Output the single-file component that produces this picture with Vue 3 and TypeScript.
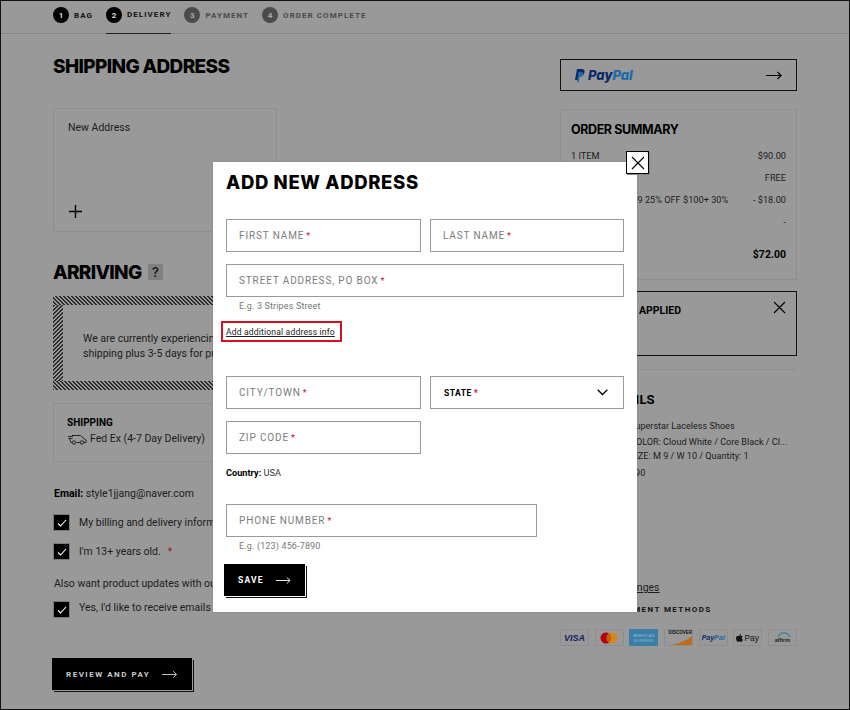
<script setup lang="ts">
const steps = [
  { n: 1, label: 'BAG', state: 'done' },
  { n: 2, label: 'DELIVERY', state: 'current' },
  { n: 3, label: 'PAYMENT', state: 'todo' },
  { n: 4, label: 'ORDER COMPLETE', state: 'todo' },
]
const summary = [
  { label: '1 ITEM', value: '$90.00' },
  { label: 'DELIVERY', value: 'FREE' },
  { label: '20% OFF $50-$99 25% OFF $100+ 30%\nOFF $200+', value: '- $18.00' },
  { label: 'SALES TAX', value: '-' },
]
const checks = [
  { id: 'billing', text: 'My billing and delivery information are the same', req: false },
  { id: 'age', text: "I'm 13+ years old.", req: true },
]
</script>

<template>
  <div class="frame">
    <nav class="steps">
      <div v-for="s in steps" :key="s.n" class="step" :class="s.state">
        <span class="num">{{ s.n }}</span><span class="lab">{{ s.label }}</span>
      </div>
    </nav>

    <main class="columns">
      <section class="left">
        <h1 class="h-ship">SHIPPING ADDRESS</h1>
        <div class="addr-card">
          <span>New Address</span>
          <svg class="plus" width="15" height="15" viewBox="0 0 15 15"><path d="M7.5 1v13M1 7.5h13" stroke="#000" stroke-width="1.4" fill="none" /></svg>
        </div>
        <h2 class="h-arr">ARRIVING <span class="q">?</span></h2>
        <div class="stripe">
          <span class="stripe-left"></span>
          <div class="stripe-in">
            We are currently experiencing high order volume. Please allow standard<br />
            shipping plus 3-5 days for processing and delivery of your order.
          </div>
        </div>
        <div class="ship-box">
          <strong>SHIPPING</strong>
          <div class="ship-line">
            <svg width="20" height="11" viewBox="0 0 20 11" fill="none" stroke="#222" stroke-width="1">
              <path d="M5 1.500h8.500l4 3.500 1.500 1v2.500h-2M9.500 8.500h4M5 8.500H4L2.500 5M1 2.500h5M1.500 4.500h4" />
              <circle cx="7" cy="8.500" r="1.700" /><circle cx="15" cy="8.500" r="1.700" />
            </svg>
            <span>Fed Ex (4-7 Day Delivery)</span>
          </div>
        </div>
        <p class="email"><b>Email:</b> style1jjang@naver.com</p>
        <div v-for="c in checks" :key="c.id" class="check-row">
          <span class="box"><svg width="10" height="8" viewBox="0 0 10 8"><path d="M1 4.500 3.500 7 9 1" stroke="#fff" stroke-width="1.100" fill="none" /></svg></span>
          <span>{{ c.text }}<i v-if="c.req" class="req-gap">*</i></span>
        </div>
        <p class="also">Also want product updates with our newsletter?</p>
        <div class="check-row raised">
          <span class="box"><svg width="10" height="8" viewBox="0 0 10 8"><path d="M1 4.500 3.500 7 9 1" stroke="#fff" stroke-width="1.100" fill="none" /></svg></span>
          <span class="raised-text">Yes, I'd like to receive emails from adidas.</span>
        </div>
        <button class="cta review">
          <span>REVIEW AND PAY</span>
          <svg width="17" height="9" viewBox="0 0 17 9"><path d="M0 4.500h15.500M12 1l3.700 3.500L12 8" stroke="#ccc" stroke-width="1" fill="none" /></svg>
        </button>
      </section>

      <aside class="right">
        <div class="paypal">
          <span class="pp"><svg width="10" height="13" viewBox="0 0 10 13"><path d="M2 0h4.500C9 0 10 1.500 9.500 3.500 9 6 7 7 5 7H3.500L2.800 11H0z" fill="#0b2a6b" /><path d="M3.500 3h3c1.500 0 2 1 1.700 2.300C8 7 6.500 8 5 8H4.500L3.800 13H2z" fill="#1b6aa8" /></svg><span><em class="pay">Pay</em><em class="pal">Pal</em></span></span>
          <svg width="16" height="9" viewBox="0 0 16 9"><path d="M0 4.500h15M11.500 1l3.700 3.500L11.500 8" stroke="#000" stroke-width="1.100" fill="none" /></svg>
        </div>
        <div class="summary">
          <h3>ORDER SUMMARY</h3>
          <div v-for="r in summary" :key="r.label" class="sum-row">
            <span class="sum-label">{{ r.label }}</span><span>{{ r.value }}</span>
          </div>
          <div class="sum-row total"><span>TOTAL</span><span>$72.00</span></div>
        </div>
        <div class="coupon">
          <strong>COUPON APPLIED</strong>
          <svg class="coupon-x" width="13" height="13" viewBox="0 0 13 13"><path d="M1 1l11 11M12 1 1 12" stroke="#000" stroke-width="1.100" fill="none" /></svg>
        </div>
        <hr class="rule" />
        <h4 class="details">ORDER DETAILS</h4>
        <div class="prod">
          <p class="p1">Superstar Laceless Shoes</p>
          <p class="p2">COLOR: Cloud White / Core Black / Cl...</p>
          <p class="p3">SIZE: M 9 / W 10 / Quantity: 1</p>
          <p class="p4">$90</p>
        </div>
        <a class="exch">Returns &amp; Exchanges</a>
        <p class="methods">ACCEPTED PAYMENT METHODS</p>
        <div class="pays">
          <span class="pay-i visa">VISA</span>
          <span class="pay-i mc"><svg width="18" height="12" viewBox="0 0 18 12"><circle cx="6" cy="6" r="5.500" fill="#b5000f" /><circle cx="12" cy="6" r="5.500" fill="#d08a1c" /><path d="M9 1.500a5.500 5.500 0 0 1 0 9 5.500 5.500 0 0 1 0-9z" fill="#cc5a10" /></svg></span>
          <span class="pay-i amex">AMERICAN<br />EXPRESS</span>
          <span class="pay-i disc">DISCOVER<svg width="22" height="9" viewBox="0 0 22 9"><path d="M0 9C8 8 16 5 22 0v9z" fill="#c26a1a" /></svg></span>
          <span class="pay-i pp-s"><span><em class="pay">Pay</em><em class="pal">Pal</em></span></span>
          <span class="pay-i apple"><svg width="7" height="8" viewBox="0 0 7 8"><path d="M3.500 2C4.500 1.500 6 1.600 6.600 2.700 5.300 3.500 5.500 5.300 7 5.800 6.500 7 5.500 8.200 4.500 7.800 3.800 7.500 3.200 7.500 2.500 7.800 1.200 8.200 0 5.800 0 4.200 0 2.200 2 1.400 3.500 2zM3.500 1.700C3.400.8 4.200 0 5 0c.1.900-.6 1.700-1.500 1.700z" fill="#111" /></svg>Pay</span>
          <span class="pay-i affirm"><svg width="20" height="6" viewBox="0 0 20 6"><path d="M6 5C8 0 15-1 18 5" stroke="#3a7ea8" stroke-width="1.200" fill="none" /></svg><b>affirm</b></span>
        </div>
      </aside>
    </main>

    <div class="modal">
      <button class="close" aria-label="Close">
        <svg width="14" height="14" viewBox="0 0 14 14"><path d="M1 1l12 12M13 1 1 13" stroke="#000" stroke-width="1.100" fill="none" /></svg>
      </button>
      <h2 class="m-title">ADD NEW ADDRESS</h2>
      <div class="f-row first">
        <div class="field">FIRST NAME<i class="req">*</i></div>
        <div class="field">LAST NAME<i class="req">*</i></div>
      </div>
      <div class="f-row single"><div class="field">STREET ADDRESS, PO BOX<i class="req">*</i></div></div>
      <p class="hint">E.g. 3 Stripes Street</p>
      <div class="link-box"><a>Add additional address info</a></div>
      <div class="f-row city">
        <div class="field">CITY/TOWN<i class="req">*</i></div>
        <div class="field select">
          <span>STATE<i class="req">*</i></span>
          <svg width="11" height="7" viewBox="0 0 11 7"><path d="M.7.8 5.500 5.500 10.300.8" stroke="#000" stroke-width="1.300" fill="none" /></svg>
        </div>
      </div>
      <div class="f-row"><div class="field">ZIP CODE<i class="req">*</i></div></div>
      <p class="country"><b>Country:</b> USA</p>
      <div class="f-row single phone"><div class="field">PHONE NUMBER<i class="req">*</i></div></div>
      <p class="hint">E.g. (123) 456-7890</p>
      <button class="cta save">
        <span>SAVE</span>
        <svg width="17" height="9" viewBox="0 0 17 9"><path d="M0 4.500h15.500M12 1l3.700 3.500L12 8" stroke="#fff" stroke-width="1" fill="none" /></svg>
      </button>
    </div>
  </div>
</template>

<style>
html, body { margin: 0; background: #999; }
</style>

<style scoped>
.frame {
  position: relative;
  width: 850px;
  height: 710px;
  box-sizing: border-box;
  border: 1px solid #111;
  background: #999;
  overflow: hidden;
  font-family: Roboto, "Liberation Sans", sans-serif;
  font-size: 10px;
  color: #1c1c1c;
}
h1, h2, h3, h4, p { margin: 0; }
i { font-style: normal; }

.steps {
  display: flex;
  height: 32px;
  padding-left: 52px;
  border-bottom: 1px solid #878787;
}
.step {
  display: flex;
  align-items: flex-start;
  gap: 5px;
  height: 32px;
  padding-top: 6px;
  box-sizing: border-box;
  margin-right: 13px;
}
.step.current { border-bottom: 1px solid #222; height: 33px; }
.num {
  width: 16px;
  height: 16px;
  border-radius: 50%;
  background: #000;
  color: #ddd;
  display: flex;
  align-items: center;
  justify-content: center;
  font-size: 8px;
  font-weight: 700;
}
.lab {
  font-size: 8px;
  font-weight: 700;
  letter-spacing: 1.050px;
  line-height: 17px;
  color: #111;
  white-space: nowrap;
}
.step.current .lab { line-height: 15px; }
.todo .num { background: #4b4b4b; color: #aaa; }
.todo .lab { color: #4a4a4a; }

.columns { display: flex; padding-left: 52px; }
.left { width: 507px; flex: none; }
.right { width: 237px; flex: none; }

.h-ship {
  margin-top: 22px;
  font-family: Inter, sans-serif;
  font-size: 19px;
  font-weight: 800;
  letter-spacing: -0.650px;
  line-height: 22px;
  color: #000;
}
.addr-card {
  position: relative;
  margin-top: 30px;
  width: 224px;
  height: 124px;
  box-sizing: border-box;
  border: 1px solid #8e8e8e;
  padding: 12px 14px;
  font-size: 10.500px;
}
.plus { position: absolute; left: 14px; bottom: 12px; }
.h-arr {
  margin-top: 29px;
  font-family: Inter, sans-serif;
  font-size: 19px;
  font-weight: 800;
  letter-spacing: -0.700px;
  line-height: 24px;
  color: #000;
}
.q {
  display: inline-flex;
  align-items: center;
  justify-content: center;
  width: 15px;
  height: 16px;
  margin-left: 3px;
  background: #808080;
  font-size: 13px;
  font-weight: 500;
  letter-spacing: 0;
  vertical-align: 2px;
  color: #111;
}
.stripe {
  position: relative;
  margin-top: 11px;
  height: 94px;
  width: 480px;
  box-sizing: border-box;
  padding: 9px 10px;
  background: repeating-linear-gradient(45deg, #2c2c2c 0 1.414px, #999 1.414px 2.828px);
}
.stripe-left {
  position: absolute;
  left: 0;
  top: 9px;
  bottom: 9px;
  width: 10px;
  background: repeating-linear-gradient(-45deg, #2c2c2c 0 1.414px, #999 1.414px 2.828px);
}
.stripe-in {
  position: relative;
  height: 100%;
  box-sizing: border-box;
  background: #999;
  padding: 27px 20px 0;
  font-size: 10.500px;
  line-height: 14.500px;
  white-space: nowrap;
}
.ship-box {
  margin-top: 13px;
  height: 59px;
  width: 480px;
  box-sizing: border-box;
  border: 1px solid #8e8e8e;
  padding: 13px 13px;
  font-size: 10.500px;
}
.ship-box strong { display: block; font-size: 10px; line-height: 12px; color: #000; }
.ship-line { display: flex; align-items: center; gap: 3px; margin-top: 3px; line-height: 14px; }
.email { margin-top: 25px; padding-left: 1px; font-size: 10.500px; line-height: 13px; }
.email b { color: #000; }
.check-row {
  display: flex;
  align-items: center;
  gap: 9px;
  height: 19px;
  margin-top: 10px;
  font-size: 10.500px;
  white-space: nowrap;
}
.email + .check-row { margin-top: 13px; }
.box {
  width: 17px;
  height: 17px;
  box-sizing: border-box;
  background: #000;
  border: 1px solid #7a7a7a;
  display: flex;
  align-items: center;
  justify-content: center;
  flex: none;
}
.req-gap { color: #a30d1c; margin-left: 7px; font-size: 10px; }
.also { margin-top: 16px; padding-left: 1px; font-size: 10.500px; line-height: 13px; }
.also + .check-row { margin-top: 10px; }
.raised-text { padding-bottom: 5px; }

.cta {
  display: flex;
  align-items: center;
  border: 0;
  background: #000;
  font-family: Roboto, sans-serif;
  font-weight: 700;
  cursor: pointer;
  box-sizing: border-box;
  padding: 0;
  white-space: nowrap;
}
.review {
  width: 140px;
  height: 32px;
  margin-top: 39px;
  margin-left: -1px;
  padding: 0 14px;
  gap: 12px;
  font-size: 8px;
  letter-spacing: 1.500px;
  box-shadow: 1px 1px 0 #999, 2px 2px 0 #111;
  color: #ccc;
}

.paypal {
  margin-top: 25px;
  height: 32px;
  box-sizing: border-box;
  border: 1px solid #111;
  display: flex;
  align-items: center;
  justify-content: space-between;
  padding: 0 14px;
}
.pp { display: flex; align-items: center; gap: 3px; font-size: 13px; font-weight: 800; font-family: Inter, sans-serif; }
.pay { color: #0b2a6b; font-style: italic; }
.pal { color: #1b6aa8; font-style: italic; }
.summary {
  margin-top: 18px;
  height: 171px;
  box-sizing: border-box;
  border: 1px solid #8e8e8e;
  padding: 12px 10px;
}
.summary h3 {
  font-family: Inter, sans-serif;
  font-size: 12.500px;
  font-weight: 700;
  letter-spacing: -0.400px;
  line-height: 15px;
  color: #000;
  margin-bottom: 13px;
}
.sum-row {
  display: flex;
  justify-content: space-between;
  font-size: 9.200px;
  height: 22px;
  line-height: 12px;
}
.sum-label { white-space: pre-line; }
.sum-row:nth-of-type(4) { height: 33px; }
.sum-row:nth-of-type(5) { height: 21px; }
.total { font-weight: 700; font-size: 10.500px; color: #000; }
.coupon {
  position: relative;
  margin-top: 11px;
  height: 65px;
  box-sizing: border-box;
  border: 1px solid #111;
  padding: 12px 14px;
  font-size: 10.500px;
  color: #000;
  text-align: right;
  padding-right: 115px;
  white-space: nowrap;
}
.coupon-x { position: absolute; right: 10px; top: 9px; }
.rule { margin: 13px 0 0; border: 0; border-top: 1px solid #8e8e8e; }
.details {
  margin-top: 22px;
  margin-left: -1px;
  font-size: 13px;
  font-weight: 700;
  line-height: 15px;
  color: #000;
}
.prod { padding-left: 70px; font-size: 9.100px; white-space: nowrap; }
.p1 { margin-top: 13px; line-height: 12px; }
.p2 { margin-top: 4px; line-height: 12px; }
.p3 { margin-top: 1px; line-height: 14px; }
.p4 { margin-top: 4px; line-height: 12px; }
.exch {
  display: block;
  margin-top: 102px;
  padding-left: 1px;
  font-size: 10.500px;
  line-height: 13px;
  text-decoration: underline;
}
.methods {
  margin-top: 10px;
  font-size: 8px;
  font-weight: 700;
  letter-spacing: 1.400px;
  line-height: 11px;
  color: #111;
}
.pays { display: flex; justify-content: space-between; margin-top: 14px; }
.pay-i {
  width: 29px;
  height: 17px;
  box-sizing: border-box;
  border: 1px solid #8e8e8e;
  display: flex;
  align-items: center;
  justify-content: center;
  flex: none;
  font-family: "Liberation Sans", sans-serif;
}
.visa { font-size: 9px; font-weight: 700; font-style: italic; color: #111f60; }
.amex {
  border: 0;
  background: #3a7fa8;
  color: #8fb9cf;
  font-size: 4px;
  line-height: 5px;
  text-align: center;
  flex-direction: column;
}
.disc {
  flex-direction: column;
  justify-content: flex-start;
  align-items: flex-end;
  font-size: 4.500px;
  font-weight: 700;
  line-height: 6px;
  color: #111;
}
.pp-s { font-size: 7px; font-weight: 700; }
.apple { font-size: 8.500px; gap: 1px; color: #111; font-weight: 500; }
.affirm { flex-direction: column; font-size: 5.500px; line-height: 5px; color: #222; }

.modal {
  position: absolute;
  left: 212px;
  top: 161px;
  width: 424px;
  height: 450px;
  box-sizing: border-box;
  background: #fff;
  padding: 0 13px;
  box-shadow: 0 0 2px rgba(0, 0, 0, 0.15);
}
.close {
  position: absolute;
  right: -12px;
  top: -11px;
  width: 23px;
  height: 23px;
  border: 1px solid #000;
  background: #fff;
  padding: 0;
  display: flex;
  align-items: center;
  justify-content: center;
  box-shadow: 1px 1px 0 #888;
}
.m-title {
  padding-top: 9px;
  font-family: Inter, sans-serif;
  font-size: 18.500px;
  font-weight: 800;
  letter-spacing: 0.650px;
  line-height: 22px;
  color: #000;
}
.f-row { display: grid; grid-template-columns: 195px 194px; column-gap: 9px; margin-top: 12px; }
.f-row.single { grid-template-columns: 1fr; }
.f-row.first { margin-top: 26px; }
.f-row.city { margin-top: 34px; }
.f-row.phone { width: 311px; margin-top: 26px; }
.field {
  min-width: 0;
  height: 33px;
  box-sizing: border-box;
  border: 1px solid #9a9a9a;
  padding: 0 12px;
  display: flex;
  align-items: center;
  font-size: 10px;
  letter-spacing: 0.860px;
  color: #7c7c7c;
  white-space: nowrap;
}
.req { color: #c8102e; margin-left: 2px; font-size: 9px; letter-spacing: 0; }
.select {
  justify-content: space-between;
  color: #000;
  font-size: 8.500px;
  font-weight: 700;
  letter-spacing: 0.500px;
  padding: 0 15px 0 13px;
}
.hint {
  margin-top: 3px;
  padding-left: 13px;
  font-size: 9px;
  line-height: 12px;
  letter-spacing: 0.150px;
  color: #777;
}
.link-box {
  margin-top: 9px;
  margin-left: -5px;
  margin-bottom: 1px;
  width: 121px;
  height: 21px;
  box-sizing: border-box;
  border: 2px solid #d5101f;
  display: flex;
  align-items: center;
  padding-left: 3px;
  font-size: 8.600px;
  letter-spacing: 0.150px;
  white-space: nowrap;
  color: #222;
}
.link-box a { text-decoration: underline; }
.country {
  margin-top: 13px;
  font-size: 9.200px;
  line-height: 11px;
  color: #333;
}
.country b { color: #000; }
.save {
  width: 81px;
  height: 32px;
  margin-top: 12px;
  margin-left: -2px;
  padding: 0 14px;
  gap: 12px;
  font-size: 8.500px;
  letter-spacing: 1.200px;
  color: #fff;
  box-shadow: 1px 1px 0 #fff, 2px 2px 0 #111;
}
</style>
